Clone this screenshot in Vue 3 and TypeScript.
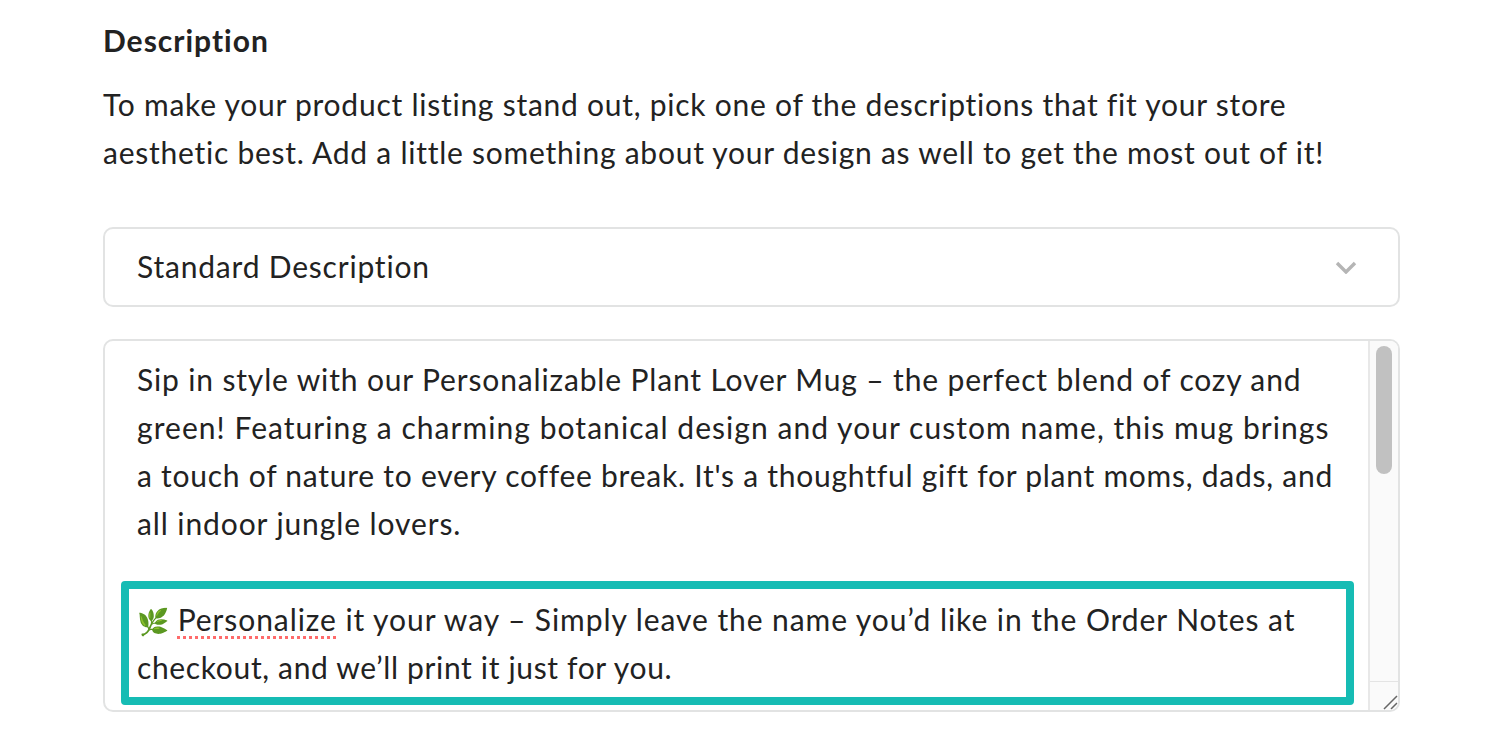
<script setup lang="ts">
const paragraphLines: string[] = [
  "Sip in style with our Personalizable Plant Lover Mug – the perfect blend of cozy and",
  "green! Featuring a charming botanical design and your custom name, this mug brings",
  "a touch of nature to every coffee break. It's a thoughtful gift for plant moms, dads, and",
  "all indoor jungle lovers.",
]
</script>

<template>
  <div class="page">
    <h2 class="title">Description</h2>
    <p class="intro">To make your product listing stand out, pick one of the descriptions that fit your store aesthetic best. Add a little something about your design as well to get the most out of it!</p>
    <div class="select">
      <span class="select-label">Standard Description</span>
      <svg class="chev" width="22" height="14" viewBox="0 0 22 14"><path d="M2 3l9 9 9-9" fill="none" stroke="#b5b5b5" stroke-width="3.4"/></svg>
    </div>
    <div class="area">
      <div class="text">
        <div class="para">
          <div v-for="line in paragraphLines" :key="line" class="line">{{ line }}</div>
        </div>
        <div class="highlight">
          <div class="hl-line hl-first"><span class="leaf">🌿</span> <span class="spell">Personalize</span> it your way – Simply leave the name you’d like in the Order Notes at</div>
          <div class="hl-line hl-second">checkout, and we’ll print it just for you.</div>
        </div>
      </div>
      <div class="scroll">
        <div class="thumb"></div>
        <div class="resizer">
          <svg class="grip" width="16" height="16" viewBox="0 0 16 16"><path d="M2 15L15 2M9 15l6-6" stroke="#666" stroke-width="1.5" fill="none"/></svg>
        </div>
      </div>
    </div>
  </div>
</template>

<style>
html, body { margin: 0; background: #fff; overflow: hidden; }
</style>

<style scoped>
.page {
  box-sizing: border-box;
  width: 1400px;
  height: 748px;
  padding: 0 0 0 103px;
  font-family: Lato, "Open Sans", "Liberation Sans", sans-serif;
  color: #222;
  font-size: 30px;
  letter-spacing: 0.8px;
  overflow: hidden;
}
.title { margin: 0; padding-top: 22px; font-size: 30px; font-weight: 700; line-height: 36px; letter-spacing: 1px; }
.intro { margin: 22px 0 0; line-height: 48px; letter-spacing: 0.75px; }
.select {
  box-sizing: border-box;
  margin-top: 51px;
  height: 80px;
  border: 2px solid #e2e3e3;
  border-radius: 10px;
  padding: 0 41px 0 32px;
  display: flex;
  align-items: center;
  justify-content: space-between;
}
.select-label { margin-bottom: 3px; }
.area {
  box-sizing: border-box;
  margin-top: 32px;
  height: 373px;
  border: 2px solid #e2e3e3;
  border-radius: 10px;
  display: flex;
  overflow: hidden;
}
.text { flex: 1; padding: 14px 14px 0 16px; min-width: 0; line-height: 48px; }
.para { margin: 0 0 0 16px; }
.line { white-space: nowrap; }
.line:nth-child(1) { letter-spacing: 0.85px; }
.line:nth-child(2) { letter-spacing: 1.05px; }
.line:nth-child(3) { letter-spacing: 0.75px; }
.line:nth-child(4) { letter-spacing: 0.9px; }
.highlight { margin-top: 34px; border: 8px solid #16bcb4; border-radius: 4px; padding: 6px 0 6px 8px; }
.hl-line { white-space: nowrap; }
.hl-first { letter-spacing: 0.93px; }
.hl-second { letter-spacing: 0.65px; }
.leaf { font-size: 26px; letter-spacing: 0; line-height: 0; }
.spell { text-decoration: underline dotted #ff6b6b 3px; text-underline-offset: 5px; }
.scroll {
  width: 30px;
  flex: none;
  box-sizing: border-box;
  background: #fafafa;
  border-left: 2px solid #e8e8e8;
  display: flex;
  flex-direction: column;
  justify-content: space-between;
}
.thumb { width: 16px; height: 128px; margin: 5px 0 0 6px; border-radius: 8px; background: #c1c1c1; }
.resizer {
  box-sizing: border-box;
  height: 29px;
  border-top: 1px solid #e4e4e4;
  display: flex;
  align-items: flex-end;
  justify-content: flex-end;
}
.grip { display: block; }
</style>
